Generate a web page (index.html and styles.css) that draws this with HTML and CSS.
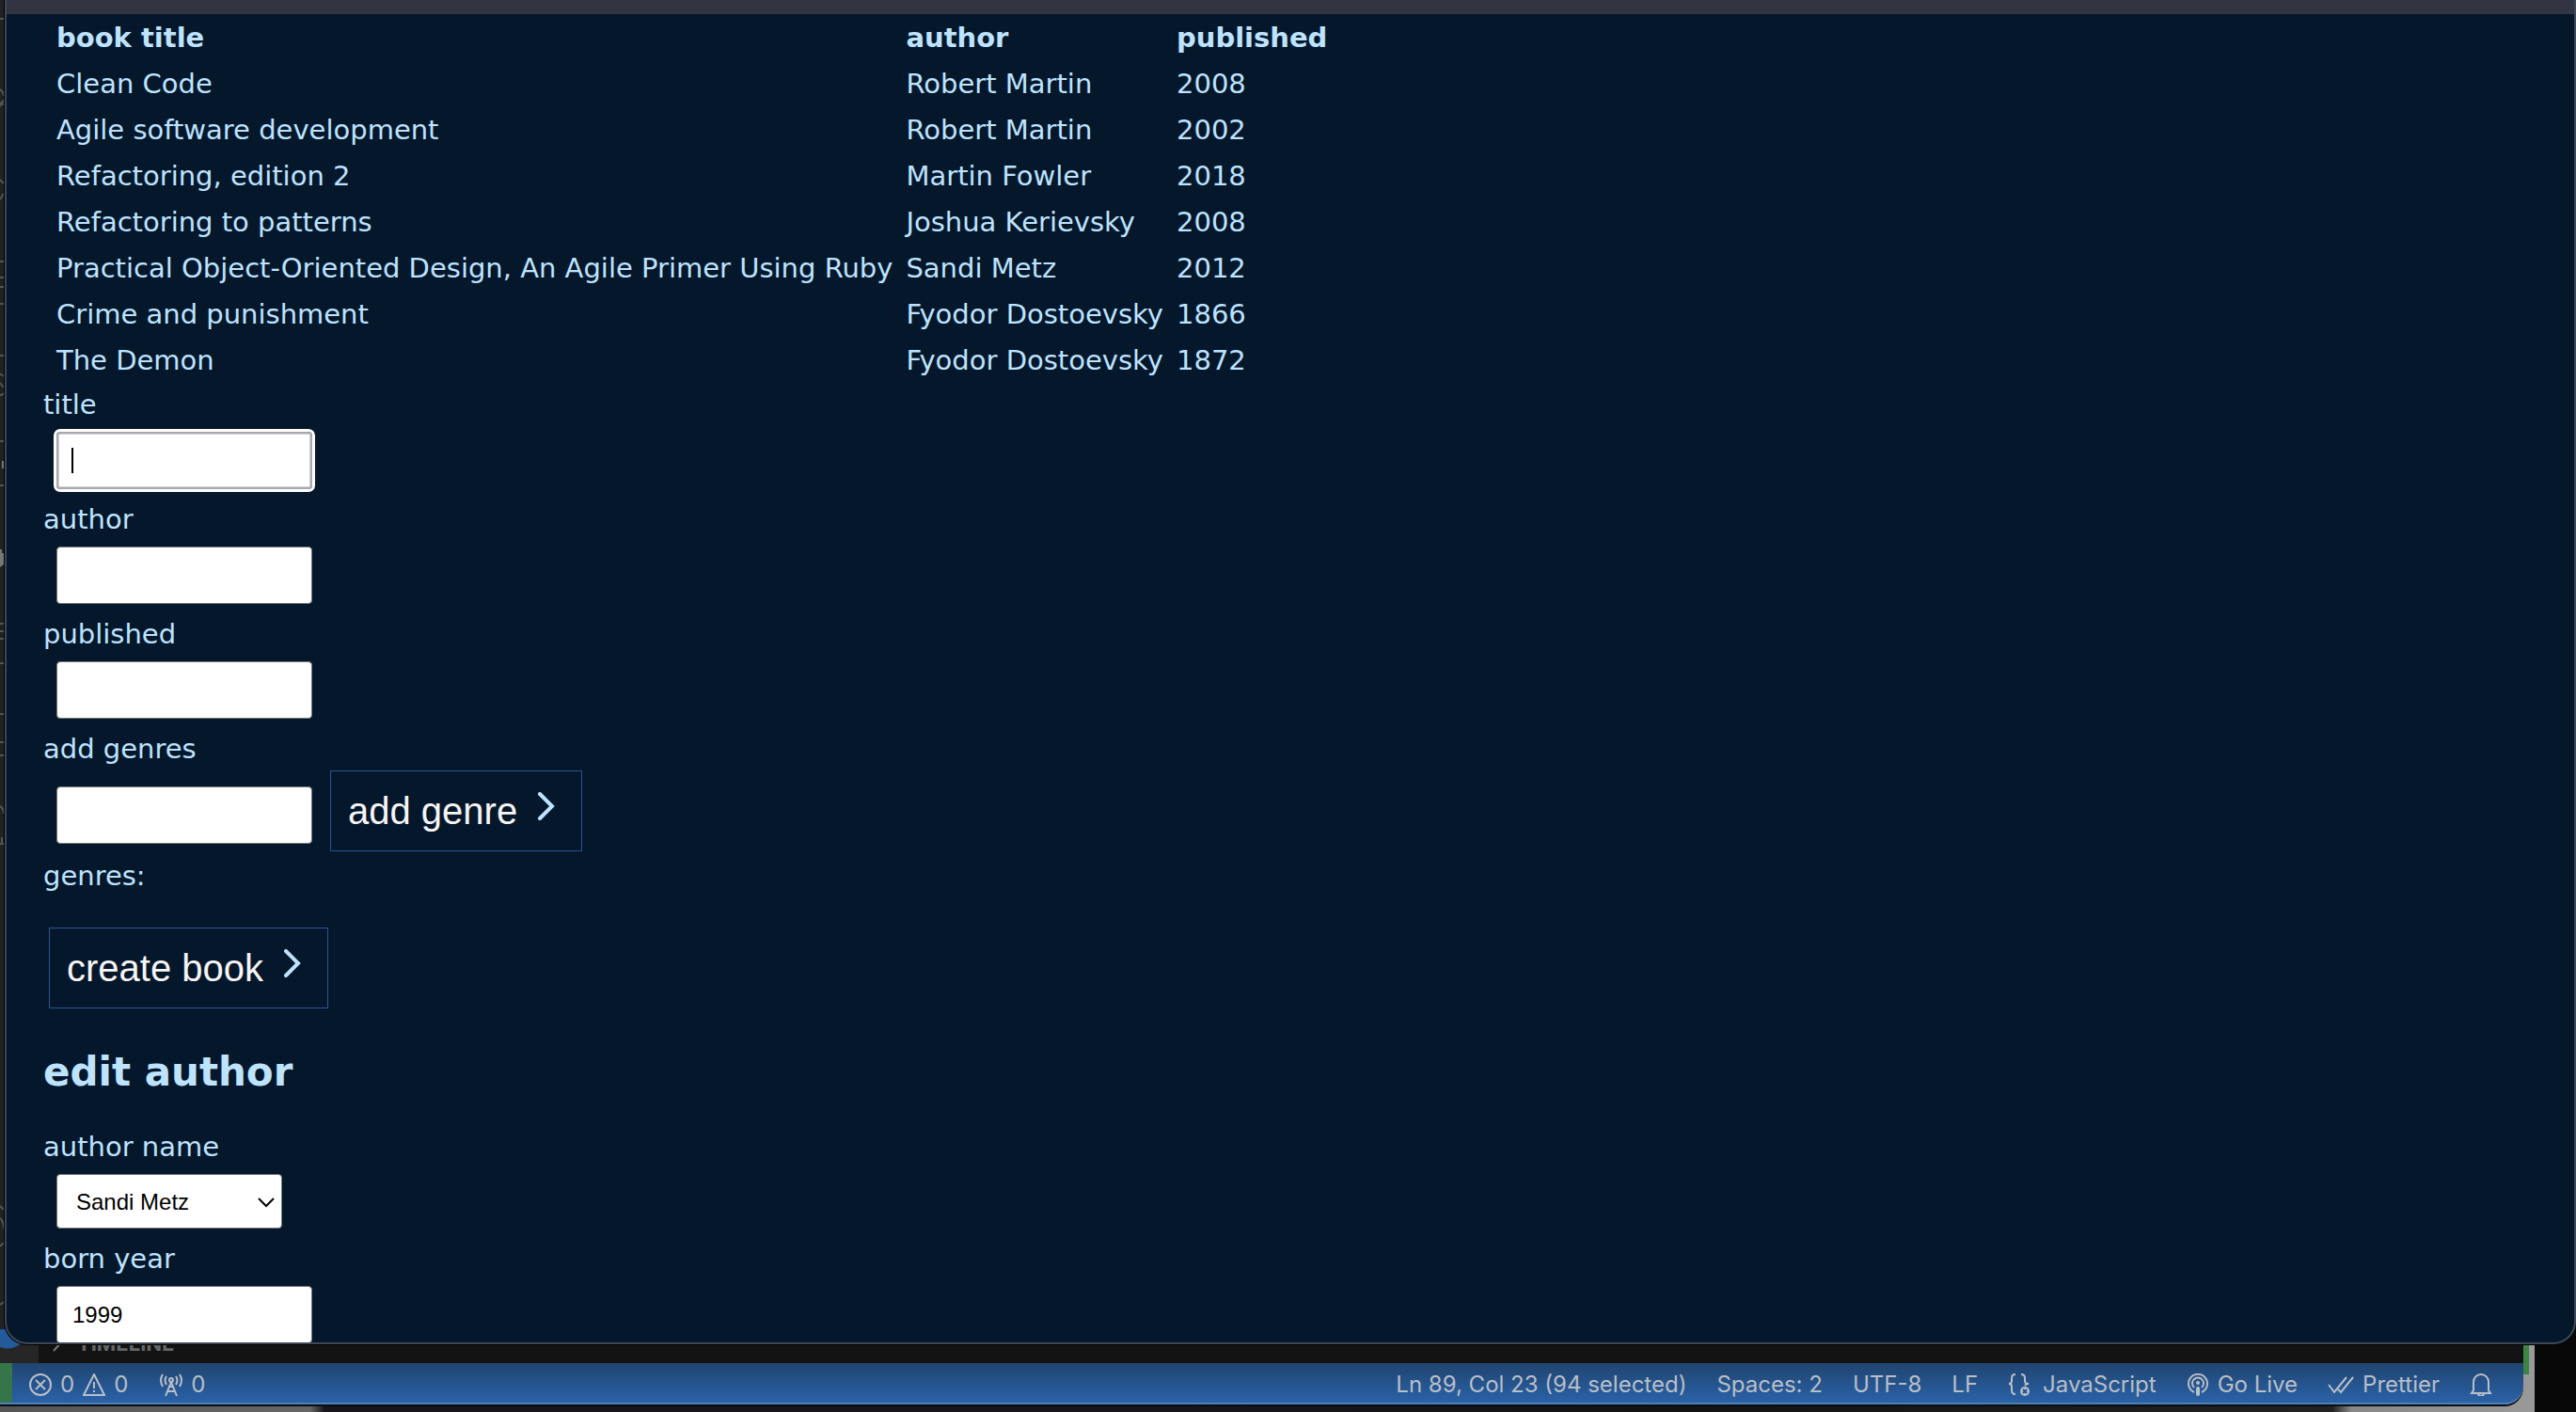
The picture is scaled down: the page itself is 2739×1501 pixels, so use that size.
FILE: index.html
```html
<!DOCTYPE html>
<html lang="en">
<head>
<meta charset="utf-8">
<title>Library</title>
<link rel="stylesheet" href="styles.css">
</head>
<body>
<svg class="activity" viewBox="0 0 5 1429" aria-hidden="true">
  <path d="M0 20 H4 M0 95 Q4 98 4 102 M0 109 Q4 110 4 112 M0 113 L4 106 M0 191 L4 195 M0 212 L4 206 M0 278 H4 M0 295 H4 M0 305 H4 M0 323 H4 M0 378 H4 M0 398 Q3 398 4 400 M0 420 Q3 420 4 418 M0 407 L4 412 M0 469 H4 M0 516 H4 M0 663 H4 M0 671 H4 M0 679 H4 M0 705 H4 M0 759 H4 M0 789 H4 M0 803 H4 M0 857 Q4 859 4 865 M2 897 V890 M0 897 H4 M0 1282 L4 1286 M0 1295 Q4 1298 4 1306 M0 1325 L4 1321 M0 1387 L4 1384"/>
  <path class="fill" d="M2 490 H4 V498 H2 Z M0 584 H2 V588 H4 V600 L0 603 Z"/>
</svg>
<main class="window">
  <div class="toolbar"></div>
  <div class="content">
    <table class="books">
      <thead><tr><th>book title</th><th>author</th><th>published</th></tr></thead>
      <tbody>
        <tr><td>Clean Code</td><td>Robert Martin</td><td>2008</td></tr>
        <tr><td>Agile software development</td><td>Robert Martin</td><td>2002</td></tr>
        <tr><td>Refactoring, edition 2</td><td>Martin Fowler</td><td>2018</td></tr>
        <tr><td>Refactoring to patterns</td><td>Joshua Kerievsky</td><td>2008</td></tr>
        <tr><td>Practical Object-Oriented Design, An Agile Primer Using Ruby</td><td>Sandi Metz</td><td>2012</td></tr>
        <tr><td>Crime and punishment</td><td>Fyodor Dostoevsky</td><td>1866</td></tr>
        <tr><td>The Demon</td><td>Fyodor Dostoevsky</td><td>1872</td></tr>
      </tbody>
    </table>
    <form>
      <label class="label" for="title">title</label>
      <div class="field"><input class="box focused" id="title" type="text"><span class="caret"></span></div>
      <label class="label" for="author">author</label>
      <div class="field"><input class="box" id="author" type="text"></div>
      <label class="label" for="published">published</label>
      <div class="field"><input class="box" id="published" type="text"></div>
      <label class="label" for="genre">add genres</label>
      <div class="genre-row">
        <input class="box" id="genre" type="text">
        <button class="btn" type="button">add genre<svg class="chevron" viewBox="0 0 18 30" aria-hidden="true"><path d="M2 2 L15 15 L2 28"/></svg></button>
      </div>
      <div class="label">genres:</div>
      <button class="btn create" type="submit">create book<svg class="chevron" viewBox="0 0 18 30" aria-hidden="true"><path d="M2 2 L15 15 L2 28"/></svg></button>
    </form>
    <h2>edit author</h2>
    <form>
      <label class="label" for="name">author name</label>
      <div class="field">
        <select class="box select" id="name"><option>Sandi Metz</option></select>
        <svg class="arrow" viewBox="0 0 18 12" aria-hidden="true"><path d="M1 2 L9 10 L17 2"/></svg>
      </div>
      <label class="label" for="born">born year</label>
      <div class="field"><input class="box" id="born" type="text" value="1999"></div>
    </form>
  </div>
</main>
<section class="desktop">
  <div class="editor">
    <div class="panel">
      <svg class="panel-arrow" viewBox="0 0 12 20" aria-hidden="true"><path d="M10 1 V8 L1 18"/></svg>
      <span>TIMELINE</span>
    </div>
    <footer class="status">
      <div class="group problems">
        <svg class="icon" viewBox="0 0 24 24"><circle cx="12" cy="12" r="11"/><path d="M7 7 L17 17 M17 7 L7 17"/></svg><span>0</span>
        <svg class="icon" viewBox="0 0 24 24"><path d="M12 1 L23 23 H1 Z M12 9 V16 M12 18 V20"/></svg><span>0</span>
      </div>
      <div class="group ports">
        <svg class="icon" viewBox="0 0 24 24"><path d="M12 9 L6 24 M12 9 L18 24 M8 19 H16 M10 14 H14 M7 3 Q4 7 7 12 M17 3 Q20 7 17 12 M3 1 Q-1 7 3 14 M21 1 Q25 7 21 14"/><circle cx="12" cy="7" r="2"/></svg><span>0</span>
      </div>
      <div class="group details">
        <span>Ln 89, Col 23 (94 selected)</span>
        <span>Spaces: 2</span>
        <span>UTF-8</span>
        <span>LF</span>
        <span class="group language"><svg class="icon" viewBox="0 0 24 24"><path d="M8 1 Q4 1 4 5 V8 Q4 11 1 11 Q4 11 4 14 V18 Q4 22 8 22 M14 1 Q18 1 18 5 V8 Q18 11 22 11 Q19 11 18 13"/><circle class="solid" cx="18" cy="19" r="5"/><path class="cut" d="M16 17 L20 21 M20 17 L16 21"/></svg>JavaScript</span>
        <span class="group"><svg class="icon" viewBox="0 0 24 24"><path d="M8 20 A10 10 0 1 1 16 20 M8 15 A6 6 0 1 1 16 15"/><circle class="solid" cx="12" cy="10" r="2"/><rect class="solid" x="10" y="14" width="4" height="10" rx="2"/></svg>Go Live</span>
        <span class="group"><svg class="icon wide" viewBox="0 0 28 24"><path d="M1 12 L7 20 L20 4 M11 17 L14 20 L27 4"/></svg>Prettier</span>
        <svg class="icon" viewBox="0 0 24 24"><path d="M4 18 V9 A8 8 0 0 1 20 9 V18 L22 21 H2 Z M9 21 A3 3 0 0 0 15 21"/></svg>
      </div>
    </footer>
  </div>
  <div class="behind"></div>
</section>
</body>
</html>
```
FILE: styles.css
```css
* { box-sizing: border-box; }
html, body { height: 100%; }
body {
  position: relative;
  margin: 0;
  overflow: hidden;
  display: flex;
  flex-direction: column;
  background: #222;
  font-family: Verdana, "DejaVu Sans", sans-serif;
  font-size: 29px;
  color: #bde3ff;
}
svg { flex: none; fill: none; }

/* edge of the editor's activity bar */
.activity { position: absolute; left: 0; top: 0; width: 5px; height: 1429px; stroke: #555; stroke-width: 2; }
.activity .fill { fill: #777; stroke: none; }

.window {
  position: relative;
  z-index: 1;
  flex: 1;
  min-height: 0;
  overflow: hidden;
  margin-left: 5px;
  border: 2px solid #3d4859;
  border-top: 0;
  border-radius: 0 0 24px 24px;
  background: #05172b;
  box-shadow: 0 0 0 1px #000;
}
.toolbar { height: 15px; background: #333441; }
.content { padding-left: 39px; }

.books { margin-left: 14px; border-spacing: 0; }
.books th, .books td { height: 49px; padding: 0 14px 0 0; line-height: 40px; text-align: left; white-space: nowrap; }
.label { display: block; line-height: 46px; }
.field { position: relative; display: flex; padding: 6px 14px 9px; }
.box {
  width: 272px;
  height: 61px;
  padding: 0 16px;
  border: 1px solid #767676;
  border-radius: 4px;
  background: #fff;
  font: 24px "Liberation Sans", Arial, sans-serif;
  color: #000;
}
.focused {
  border: 2px solid #a9a8b0;
  outline: 3px solid #fff;
  box-shadow: inset 0 0 0 1px #d4d3da;
}
.caret { position: absolute; left: 30px; top: 23px; width: 2px; height: 27px; background: #000; }
.genre-row { display: flex; align-items: flex-end; gap: 19px; padding: 0 0 3px 14px; }
.genre-row .box { margin-bottom: 8px; }
.btn {
  display: flex;
  align-items: center;
  gap: 22px;
  height: 86px;
  padding: 0 28px 0 18px;
  border: 1px solid #285494;
  background: transparent;
  color: #f5f5f5;
  font: 40px "Liberation Sans", Arial, sans-serif;
}
.create { margin: 32px 0 0 6px; }
.chevron { width: 18px; height: 30px; margin-bottom: 10px; stroke: #bde3ff; stroke-width: 4; stroke-linecap: round; }
h2 { margin: 40px 0 28px; font-size: 42px; line-height: 56px; }
.select { width: 240px; height: 58px; padding: 0 20px; appearance: none; }
.arrow { position: absolute; left: 228px; top: 30px; width: 18px; height: 12px; stroke: #000; stroke-width: 2; }

.desktop {
  display: flex;
  flex: none;
  height: 88px;
  margin-top: -16px;
  background: linear-gradient(90deg, #555 0, #666 330px, #18161c 345px, #18161c 1200px, #131313 1800px, #222 2480px, #888 2500px, #999 2695px, #080808 2695px);
}
.editor { flex: 1; display: flex; flex-direction: column; padding-bottom: 8px; }
.behind {
  width: 56px;
  background: linear-gradient(90deg, #3d8545 6px, transparent 6px) no-repeat 0 0 / 6px 48px;
}
.panel {
  display: flex;
  align-items: flex-start;
  gap: 14px;
  height: 36px;
  padding: 5px 0 0 56px;
  background: radial-gradient(circle at 8px 0, #235a9c 20px, transparent 21px), linear-gradient(90deg, #262626 41px, #131313 41px);
  color: #666;
  font: bold 22px/20px Inter, sans-serif;
}
.panel-arrow { width: 12px; height: 20px; stroke: #777; stroke-width: 2; }
.status {
  flex: 1;
  display: flex;
  align-items: center;
  padding: 3px 33px 0 31px;
  border-bottom: 2px solid #4f7fb8;
  border-radius: 0 0 20px 0;
  background: linear-gradient(90deg, #367549 13px, transparent 13px), linear-gradient(#20446f, #2a62a8);
  box-shadow: 0 2px 0 #080c14;
  color: #b8bfc8;
  font: 24px/30px Inter, sans-serif;
}
.group { display: flex; align-items: center; gap: 9px; }
.ports { margin-left: 34px; }
.details { margin-left: auto; gap: 32px; }
.language { gap: 13px; }
.icon { width: 24px; height: 24px; stroke: #b8bfc8; stroke-width: 2; }
.wide { width: 28px; }
.solid { fill: #b8bfc8; stroke: none; }
.cut { stroke: #25548d; }
```
